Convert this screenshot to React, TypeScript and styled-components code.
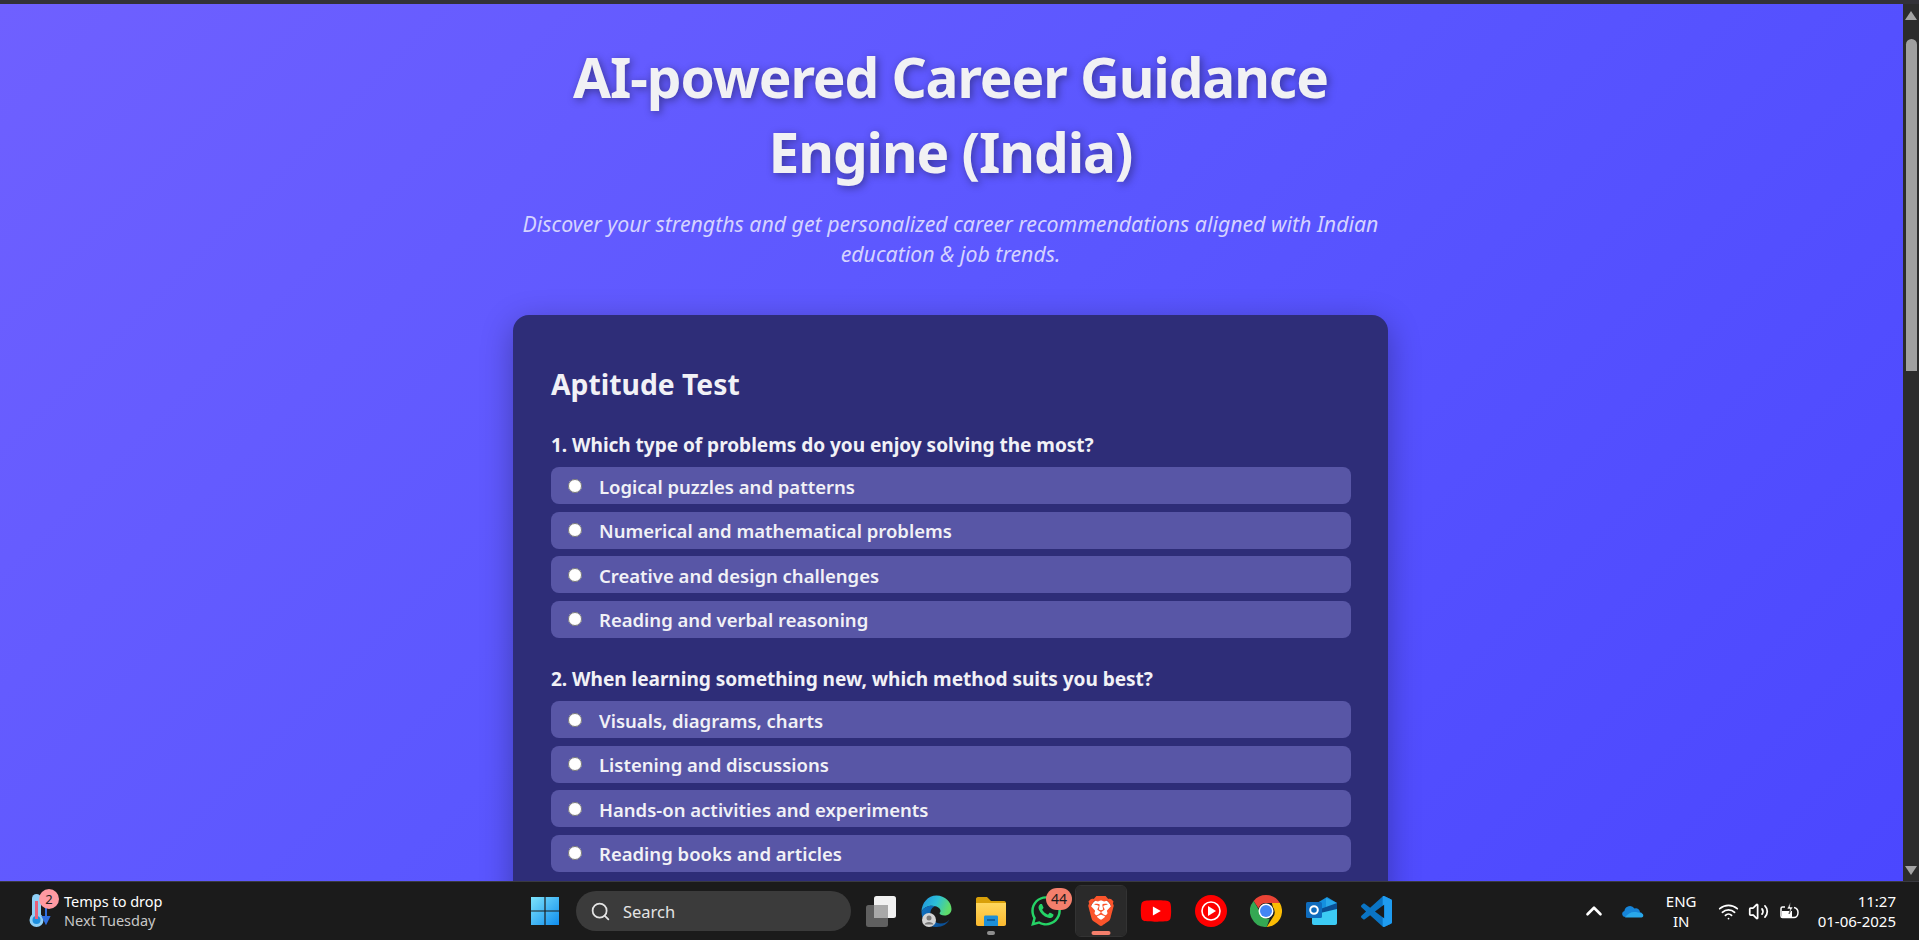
import React from "react";
import styled, { createGlobalStyle } from "styled-components";
import { Search, Wifi, Volume2, ChevronUp } from "lucide-react";
import { FaWhatsapp, FaYoutube } from "react-icons/fa";
import { SiBrave } from "react-icons/si";

const kSans = `"Noto Sans", "Open Sans", sans-serif`;

const kQuestions = [
  {
    title: "1. Which type of problems do you enjoy solving the most?",
    options: [
      "Logical puzzles and patterns",
      "Numerical and mathematical problems",
      "Creative and design challenges",
      "Reading and verbal reasoning",
    ],
  },
  {
    title: "2. When learning something new, which method suits you best?",
    options: [
      "Visuals, diagrams, charts",
      "Listening and discussions",
      "Hands-on activities and experiments",
      "Reading books and articles",
    ],
  },
];

const GlobalStyle = createGlobalStyle`
  html, body {
    margin: 0;
    height: 100%;
    overflow: hidden;
    background: #1c1c1c;
  }
  * {
    box-sizing: border-box;
  }
`;

const Screen = styled.div`
  width: 1919px;
  height: 940px;
  display: flex;
  flex-direction: column;
  overflow: hidden;
  font-family: ${kSans};
`;

const TopStrip = styled.div`
  height: 4px;
  flex: none;
  background: #333238;
`;

const Viewport = styled.div`
  flex: 1;
  min-height: 0;
  display: flex;
`;

const Page = styled.main`
  flex: 1;
  min-width: 0;
  overflow: hidden;
  display: flex;
  flex-direction: column;
  align-items: center;
  padding: 35px 2px 0 0;
  background: linear-gradient(135deg, #6f60ff 0%, #5b57ff 45%, #4b47ff 100%);
`;

const Title = styled.h1`
  width: 875px;
  margin: 0;
  font-size: 55px;
  line-height: 75px;
  font-weight: 700;
  text-align: center;
  letter-spacing: -1.1px;
  color: #f1f1f4;
  text-shadow: 2px 2px 8px rgba(0, 0, 0, 0.4);
`;

const Subtitle = styled.p`
  width: 875px;
  margin: 20px 0 47px;
  font-size: 21.3px;
  line-height: 29.5px;
  font-style: italic;
  text-align: center;
  color: #d5d3ff;
`;

const Card = styled.section`
  width: 875px;
  flex: none;
  padding: 49px 37px 38px 38px;
  border-radius: 16px;
  background: #2e2d78;
  box-shadow: 0 8px 32px rgba(0, 0, 0, 0.3);
  color: #f1f1f6;
`;

const CardTitle = styled.h2`
  margin: 0 0 27px;
  font-size: 28.3px;
  line-height: 40px;
  font-weight: 700;
`;

const Question = styled.fieldset`
  margin: 0 0 20px;
  padding: 0;
  border: 0;
`;

const QuestionTitle = styled.div`
  height: 36px;
  font-size: 19.1px;
  line-height: 28px;
  font-weight: 700;
  letter-spacing: -0.05px;
`;

const OptionRow = styled.label`
  display: flex;
  align-items: center;
  gap: 17px;
  height: 37px;
  margin-bottom: 7.5px;
  padding: 1px 0 0 17px;
  border-radius: 8px;
  background: #5856a6;
  font-size: 18.5px;
  font-weight: 600;
`;

const Radio = styled.input`
  width: 14px;
  height: 14px;
  margin: 0 0 1px;
  flex: none;
`;

const Scrollbar = styled.div`
  width: 16px;
  flex: none;
  display: flex;
  flex-direction: column;
  align-items: center;
  background: #2c2c2c;
`;

const ScrollArrow = styled.div<{ $down?: boolean }>`
  width: 0;
  height: 0;
  flex: none;
  margin: ${(p) => (p.$down ? "auto 0 6px" : "7px 0 0")};
  border-left: 6px solid transparent;
  border-right: 6px solid transparent;
  border-bottom: ${(p) => (p.$down ? "0" : "9px solid #a3a3a3")};
  border-top: ${(p) => (p.$down ? "9px solid #a3a3a3" : "0")};
`;

const ScrollThumb = styled.div`
  width: 11px;
  height: 332px;
  margin-top: 19px;
  border-radius: 6px 6px 0 0;
  background: #a0a0a0;
`;

const Taskbar = styled.footer`
  height: 59px;
  flex: none;
  display: grid;
  grid-template-columns: 1fr auto 1fr;
  align-items: center;
  background: #1b1b1b;
  border-top: 1px solid #3a3a40;
  color: #fff;
`;

const Weather = styled.div`
  display: flex;
  align-items: center;
  gap: 13px;
  padding-left: 29px;
  position: relative;
`;

const WeatherBadge = styled.span`
  position: absolute;
  left: 39px;
  top: -3px;
  width: 20px;
  height: 20px;
  border-radius: 50%;
  background: #ff9aa2;
  color: #222;
  font-size: 13px;
  line-height: 20px;
  text-align: center;
`;

const WeatherText = styled.div`
  display: flex;
  flex-direction: column;
  font-size: 14.5px;
  line-height: 19px;
`;

const WeatherSub = styled.span`
  color: #c8c8c8;
`;

const Centre = styled.div`
  display: flex;
  align-items: center;
  gap: 5px;
  padding-left: 2px;
`;

const StartButton = styled.div`
  width: 50px;
  height: 50px;
  display: flex;
  align-items: center;
  justify-content: center;
  margin-right: 1px;
`;

const SearchBox = styled.div`
  width: 275px;
  height: 40px;
  display: flex;
  align-items: center;
  gap: 12px;
  padding-left: 14px;
  margin-right: 0;
  border-radius: 20px;
  background: #3b3b3b;
  color: #e4e4e4;
  font-size: 16.5px;
`;

const AppButton = styled.div<{ $active?: boolean }>`
  width: 50px;
  height: 50px;
  position: relative;
  display: flex;
  align-items: center;
  justify-content: center;
  border-radius: 5px;
  background: ${(p) => (p.$active ? "#2a2a2a" : "transparent")};
  outline: ${(p) => (p.$active ? "1px solid #333" : "none")};
`;

const RunningDot = styled.span<{ $active?: boolean }>`
  position: absolute;
  left: 50%;
  bottom: 1px;
  width: ${(p) => (p.$active ? "19px" : "8px")};
  height: 4px;
  transform: translateX(-50%);
  border-radius: 2px;
  background: ${(p) => (p.$active ? "#f47f6c" : "#8f8f8f")};
`;

const CountBadge = styled.span`
  position: absolute;
  left: 25px;
  top: 2px;
  width: 26px;
  height: 22px;
  border-radius: 11px;
  background: #f47f6c;
  color: #1a1a1a;
  font-size: 14px;
  line-height: 22px;
  text-align: center;
`;

const Tray = styled.div`
  display: flex;
  align-items: center;
  justify-content: flex-end;
  padding-right: 23px;
`;

const TrayIcon = styled.div<{ $w: number }>`
  width: ${(p) => p.$w}px;
  display: flex;
  align-items: center;
  justify-content: center;
`;

const Lang = styled.div`
  width: 65px;
  text-align: center;
  font-size: 15px;
  line-height: 20px;
`;

const Clock = styled.div`
  margin-left: 14px;
  text-align: right;
  font-size: 15px;
  line-height: 20px;
`;

const WhatsappIcon = styled(FaWhatsapp)`
  color: #25d366;
`;

const YoutubeWrap = styled.div`
  position: relative;
  width: 32px;
  height: 32px;
  display: flex;
  align-items: center;
  justify-content: center;
  color: #ff0000;
  background: radial-gradient(circle, #fff 0 7px, transparent 7.5px);
`;

const SwIcon = styled(SiBrave)`
  color: #fb542b;
  background: radial-gradient(circle at 50% 45%, #fff 0 10px, transparent 11px);
`;

function Thermometer() {
  return (
    <svg width="22" height="36" viewBox="0 0 22 36">
      <rect x="3" y="1" width="9" height="26" rx="4.5" fill="#8fd0f7" />
      <circle cx="7.5" cy="27" r="7" fill="#8fd0f7" />
      <circle cx="7.5" cy="27" r="4" fill="#1e90e0" />
      <rect x="6" y="8" width="3" height="18" fill="#e8607a" />
      <path d="M17 14v13M14 24l3 6 3-6z" stroke="#2f6fe0" strokeWidth="2" fill="#2f6fe0" />
    </svg>
  );
}

function StartLogo() {
  return (
    <svg width="30" height="30" viewBox="0 0 30 30">
      <defs>
        <linearGradient id="win" x1="0" y1="0" x2="1" y2="1">
          <stop offset="0" stopColor="#7de3fb" />
          <stop offset="1" stopColor="#0f8dee" />
        </linearGradient>
      </defs>
      <path
        d="M1 1h13.4v13.4H1zM15.6 1H29v13.4H15.6zM1 15.6h13.4V29H1zM15.6 15.6H29V29H15.6z"
        fill="url(#win)"
      />
    </svg>
  );
}

function TaskView() {
  return (
    <svg width="32" height="32" viewBox="0 0 32 32">
      <rect x="1" y="10" width="22" height="22" rx="2.5" fill="#606060" />
      <rect x="9" y="1" width="22" height="22" rx="2.5" fill="#f1f1f1" />
      <rect x="9" y="10" width="14" height="13" fill="#a9a9a9" />
    </svg>
  );
}

function EdgeLogo() {
  return (
    <svg width="31" height="32" viewBox="0 0 31 32">
      <defs>
        <linearGradient id="edgeA" x1="0" y1="0" x2="1" y2="0.3">
          <stop offset="0" stopColor="#1f8fe0" />
          <stop offset="0.55" stopColor="#2cc0d8" />
          <stop offset="1" stopColor="#5fdc6a" />
        </linearGradient>
        <linearGradient id="edgeB" x1="0" y1="0" x2="1" y2="0.5">
          <stop offset="0" stopColor="#0f74c4" />
          <stop offset="1" stopColor="#0b4f95" />
        </linearGradient>
      </defs>
      <path d="M15.500.5C24 .5 30.500 7 30.500 14c0 4-3 6.500-7 6.500-3 0-5-1-5-2.500 2-1.500 1-5-3-6.500C9 9.500 2.500 12 .5 17 .5 8 7 .5 15.500.5z" fill="url(#edgeA)" />
      <path d="M.5 17C2.500 12 9 9.500 14 11.500c-3.500 1-5 4-4.500 8 .6 5 5 9 10 9 4 0 7-1.500 9-4-2 4.500-7 7.500-13 7.500C7 32 .5 25 .5 17z" fill="url(#edgeB)" />
      <circle cx="8" cy="25" r="7" fill="#d4d4d4" />
      <circle cx="8" cy="23" r="2.500" fill="#7a7a7a" />
      <path d="M3.500 29.500c.5-3.500 8.500-3.500 9 0z" fill="#7a7a7a" />
    </svg>
  );
}

function FolderLogo() {
  return (
    <svg width="32" height="30" viewBox="0 0 32 30">
      <defs>
        <linearGradient id="fold" x1="0" y1="0" x2="0" y2="1">
          <stop offset="0" stopColor="#ffd75e" />
          <stop offset="1" stopColor="#fbb92f" />
        </linearGradient>
      </defs>
      <path d="M1 3c0-1 .7-2 2-2h9l4 4h13c1.500 0 2 1 2 2v4H1z" fill="#d9a009" />
      <path d="M1 7h30v21c0 1-.7 2-2 2H3c-1.300 0-2-1-2-2z" fill="url(#fold)" />
      <path d="M9 21c0-.8.500-1.500 1.500-1.500h11c1 0 1.500.7 1.500 1.500v9H9z" fill="#1d8fd8" />
      <rect x="12" y="23" width="8" height="2" fill="#0f5f9f" />
    </svg>
  );
}

function BraveLogo() {
  return <SwIcon size={30} />;
}

function YoutubeMusicLogo() {
  return (
    <svg width="32" height="32" viewBox="0 0 32 32">
      <circle cx="16" cy="16" r="16" fill="#f00" />
      <circle cx="16" cy="16" r="9" fill="none" stroke="#fff" strokeWidth="1.600" />
      <path d="M13 11l8 5-8 5z" fill="#fff" />
    </svg>
  );
}

function ChromeLogo() {
  return (
    <svg width="32" height="32" viewBox="0 0 32 32">
      <path d="M16 0a16 16 0 0 1 13.900 8H16a8 8 0 0 0-7.500 5.200L3.600 5.900A16 16 0 0 1 16 0z" fill="#ea4335" />
      <path d="M29.900 8A16 16 0 0 1 16.700 32l6.200-9.700A8 8 0 0 0 22.900 12l-1-4z" fill="#fbbc04" />
      <path d="M3.600 5.900l6.200 10.300a8 8 0 0 0 9.900 7.200L16.700 32A16 16 0 0 1 3.600 5.900z" fill="#34a853" />
      <circle cx="16" cy="16" r="7.500" fill="#fff" />
      <circle cx="16" cy="16" r="6" fill="#4285f4" />
    </svg>
  );
}

function OutlookLogo() {
  return (
    <svg width="31" height="28" viewBox="0 0 31 28">
      <path d="M6 9L21 0l10 6v8H6z" fill="#1490df" />
      <path d="M20 1l11 5v6H20z" fill="#28a8ea" />
      <path d="M6 15L31 6v7L6 22z" fill="#0a4f94" />
      <path d="M6 18l25-6v14c0 1-.7 2-2 2H8c-1.300 0-2-1-2-2z" fill="#3ccbf4" />
      <rect x="0" y="5" width="16" height="16" rx="1.500" fill="#0f6cbd" />
      <circle cx="8" cy="13" r="3.800" fill="none" stroke="#fff" strokeWidth="2" />
    </svg>
  );
}

const kVscodePath =
  "M70.9 99.3c1.600.6 3.400.6 5-.2l20.600-9.900c2.100-1 3.500-3.200 3.500-5.600V16.400c0-2.400-1.400-4.600-3.500-5.600L75.900.9c-2.100-1-4.600-.8-6.400.6-.3.2-.5.400-.7.600L29.400 38 12.200 25c-1.600-1.200-3.800-1.100-5.300.2l-5.500 5c-1.800 1.700-1.800 4.500 0 6.200L16.200 50 1.400 63.600c-1.800 1.700-1.800 4.500 0 6.200l5.500 5c1.500 1.300 3.700 1.400 5.300.2L29.400 62l39.400 35.900c.6.600 1.300 1.100 2.100 1.400zM75 27.300 45.100 50 75 72.700z";

function VscodeLogo() {
  return (
    <svg width="31" height="31" viewBox="0 0 100 100">
      <defs>
        <clipPath id="vscodeRight">
          <rect x="70" y="0" width="30" height="100" />
        </clipPath>
      </defs>
      <path d={kVscodePath} fill="#0a74c4" fillRule="evenodd" />
      <path d={kVscodePath} fill="#1f9cf0" fillRule="evenodd" clipPath="url(#vscodeRight)" />
    </svg>
  );
}

function OneDriveLogo() {
  return (
    <svg width="22" height="14" viewBox="0 0 22 14">
      <path d="M3 13a3 3 0 0 1-.6-5.900A5.500 5.500 0 0 1 12.500 4.500 4 4 0 0 1 18 8.200 2.500 2.500 0 0 1 19 13z" fill="#1684d8" />
      <path d="M3 13.500C5 10 9 8 12 8s5 .5 8 1.500c2 1 1.500 4-.5 4z" fill="#29a8ea" />
    </svg>
  );
}

function ChargeIcon() {
  return (
    <svg width="20" height="20" viewBox="0 0 20 20" fill="none" stroke="#fff" strokeWidth="1.500">
      <path d="M6 6H3.500C2.500 6 2 6.700 2 7.500v7.500c0 1 .5 1.500 1.500 1.500h11.500c2.500 0 4-2.500 4-5 0-2.500-1.500-4.500-4-5" />
      <path d="M3 10h10v6.500H4c-1 0-1-1-1-2z" fill="#fff" stroke="none" />
      <path d="M11.500 1L8 8h3l-1 5 4-7h-3z" fill="#fff" stroke="#1b1b1b" strokeWidth="0.600" />
    </svg>
  );
}

export default function App() {
  return (
    <Screen>
      <GlobalStyle />
      <TopStrip />
      <Viewport>
        <Page>
          <Title>AI-powered Career Guidance Engine (India)</Title>
          <Subtitle>
            Discover your strengths and get personalized career recommendations
            aligned with Indian education &amp; job trends.
          </Subtitle>
          <Card>
            <CardTitle>Aptitude Test</CardTitle>
            {kQuestions.map((question) => (
              <Question key={question.title}>
                <QuestionTitle>{question.title}</QuestionTitle>
                {question.options.map((option) => (
                  <OptionRow key={option}>
                    <Radio type="radio" name={question.title} />
                    {option}
                  </OptionRow>
                ))}
              </Question>
            ))}
          </Card>
        </Page>
        <Scrollbar>
          <ScrollArrow />
          <ScrollThumb />
          <ScrollArrow $down />
        </Scrollbar>
      </Viewport>
      <Taskbar>
        <Weather>
          <Thermometer />
          <WeatherBadge>2</WeatherBadge>
          <WeatherText>
            <span>Temps to drop</span>
            <WeatherSub>Next Tuesday</WeatherSub>
          </WeatherText>
        </Weather>
        <Centre>
          <StartButton>
            <StartLogo />
          </StartButton>
          <SearchBox>
            <Search size={21} color="#e4e4e4" />
            Search
          </SearchBox>
          <AppButton>
            <TaskView />
          </AppButton>
          <AppButton>
            <EdgeLogo />
          </AppButton>
          <AppButton>
            <FolderLogo />
            <RunningDot />
          </AppButton>
          <AppButton>
            <WhatsappIcon size={34} />
            <CountBadge>44</CountBadge>
          </AppButton>
          <AppButton $active>
            <BraveLogo />
            <RunningDot $active />
          </AppButton>
          <AppButton>
            <YoutubeWrap>
              <FaYoutube size={32} />
            </YoutubeWrap>
          </AppButton>
          <AppButton>
            <YoutubeMusicLogo />
          </AppButton>
          <AppButton>
            <ChromeLogo />
          </AppButton>
          <AppButton>
            <OutlookLogo />
          </AppButton>
          <AppButton>
            <VscodeLogo />
          </AppButton>
        </Centre>
        <Tray>
          <TrayIcon $w={48}>
            <ChevronUp size={26} strokeWidth={2.4} color="#fff" />
          </TrayIcon>
          <TrayIcon $w={31}>
            <OneDriveLogo />
          </TrayIcon>
          <Lang>
            ENG
            <br />
            IN
          </Lang>
          <TrayIcon $w={30}>
            <Wifi size={21} color="#fff" />
          </TrayIcon>
          <TrayIcon $w={30}>
            <Volume2 size={21} color="#fff" />
          </TrayIcon>
          <TrayIcon $w={30}>
            <ChargeIcon />
          </TrayIcon>
          <Clock>
            11:27
            <br />
            01-06-2025
          </Clock>
        </Tray>
      </Taskbar>
    </Screen>
  );
}
